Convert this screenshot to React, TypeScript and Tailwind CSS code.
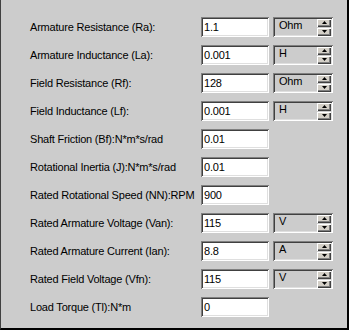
import React from "react";

type Row = { label: string; value: string; unit?: string };

const rows: Row[] = [
  { label: "Armature Resistance (Ra):", value: "1.1", unit: "Ohm" },
  { label: "Armature Inductance (La):", value: "0.001", unit: "H" },
  { label: "Field Resistance (Rf):", value: "128", unit: "Ohm" },
  { label: "Field Inductance (Lf):", value: "0.001", unit: "H" },
  { label: "Shaft Friction (Bf):N*m*s/rad", value: "0.01" },
  { label: "Rotational Inertia (J):N*m*s/rad", value: "0.01" },
  { label: "Rated Rotational Speed (NN):RPM", value: "900" },
  { label: "Rated Armature Voltage (Van):", value: "115", unit: "V" },
  { label: "Rated Armature Current (Ian):", value: "8.8", unit: "A" },
  { label: "Rated Field Voltage (Vfn):", value: "115", unit: "V" },
  { label: "Load Torque (Tl):N*m", value: "0" },
];

function SpinBtn({ up }: { up: boolean }) {
  return (
    <div className="w-[14px] h-[8px] bg-[#d4d0c8] flex items-center justify-center shadow-[inset_1px_1px_0_#ffffff,inset_-1px_-1px_0_#404040,inset_-2px_-2px_0_#808080]">
      <svg width="5" height="3" viewBox="0 0 5 3">
        {up ? (
          <polygon points="2.5,0 5,3 0,3" fill="#000" />
        ) : (
          <polygon points="0,0 5,0 2.5,3" fill="#000" />
        )}
      </svg>
    </div>
  );
}

export default function App() {
  return (
    <div
      className="w-[349px] h-[330px] bg-[#cccccc] border-l border-l-[#404040] border-r-2 border-r-black border-b-2 border-b-black box-border pt-[17px] pl-[29px] text-[11px] tracking-[-0.2px] text-black"
      style={{ fontFamily: '"Liberation Sans", Arial, sans-serif' }}
    >
      <div className="flex flex-col gap-[8px]">
        {rows.map((r) => (
          <div key={r.label} className="flex items-center h-[20px]">
            <div className="w-[171px] leading-none whitespace-nowrap">{r.label}</div>
            <div className="w-[68px] h-[20px] bg-white flex items-center pl-[3px] leading-none shadow-[inset_1px_1px_0_#808080,inset_-1px_-1px_0_#ffffff,inset_2px_2px_0_#404040,inset_-2px_-2px_0_#dfdfdf]">
              {r.value}
            </div>
            {r.unit && (
              <div className="ml-[4px] w-[60px] h-[20px] flex items-center justify-between pl-[6px] pr-[2px] leading-none shadow-[inset_1px_1px_0_#808080,inset_-1px_-1px_0_#ffffff,inset_2px_2px_0_#404040,inset_-2px_-2px_0_#dfdfdf]">
                <span className="-mt-[3px]">{r.unit}</span>
                <div className="flex flex-col gap-[1px] mr-[0px]">
                  <SpinBtn up />
                  <SpinBtn up={false} />
                </div>
              </div>
            )}
          </div>
        ))}
      </div>
    </div>
  );
}
